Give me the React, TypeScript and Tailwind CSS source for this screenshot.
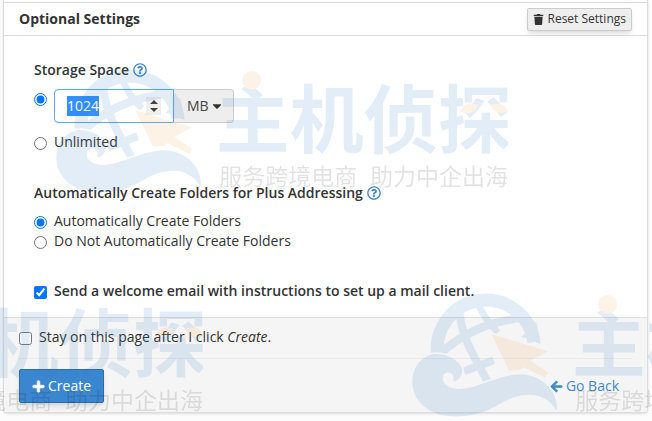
import { useEffect, useId, useRef, useState } from "react";
import { FaArrowLeft, FaCaretDown, FaPlus, FaRegQuestionCircle, FaTrash } from "react-icons/fa";

// ── Brand overlay ──────────────────────────────────────────────────────────────

const WAVE =
    "M92 224C110 219 160 222 184 260C190 275 184 294 168 302C162 306 156 302 161 296C161 282 150 274 138 279C124 285 125 302 137 314C190 355 275 285 360 283C425 284 477 335 470 392C430 325 355 338 300 371C255 400 205 411 158 409C90 408 37 365 37 306C37 268 55 236 92 224Z";
const ARROW = "M274 162L444 214L392 242L445 278L437 294L370 262L360 270L327 272Z";

function BrandMark() {
    const maskId = useId();

    return (
        <svg width="464" height="141" viewBox="0 0 1392 423" aria-hidden="true">
            <mask id={maskId} maskUnits="userSpaceOnUse" x="0" y="0" width="500" height="423">
                <rect width="500" height="423" fill="#fff" />
                <path d={WAVE} fill="#000" stroke="#000" strokeWidth="10" />
                <path d={ARROW} fill="#000" stroke="#000" strokeWidth="10" />
            </mask>
            <g opacity="0.13">
                <g mask={`url(#${maskId})`}>
                    <g fill="none" stroke="#2b78c4">
                        <path d="M113 226A144 144 0 0 1 402 186" strokeWidth="39" />
                        <path d="M124 218C180 168 250 126 385 110" strokeWidth="25" />
                        <path d="M177 84C182 160 210 210 262 303" strokeWidth="24" />
                        <path d="M232 62C244 100 264 128 294 158" strokeWidth="20" />
                        <path d="M192 274L281 241" strokeWidth="24" />
                    </g>
                    <path d="M364 172L384 174C396 184 410 189 422 192L410 130L366 110C378 130 386 142 380 152Z" fill="#2b78c4" />
                </g>
                <path d={WAVE} fill="#2b78c4" />
                <path d={ARROW} fill="#f5a14a" />
                <text
                    x="515"
                    y="272"
                    fontSize="222"
                    fontWeight="700"
                    fill="#2b78c4"
                    fontFamily="'Noto Sans CJK SC', sans-serif"
                >
                    主机侦探
                </text>
                <g fill="#f5a14a">
                    <circle cx="623" cy="73" r="28" />
                    <path d="M1248 166C1262 138 1286 140 1304 148C1288 178 1266 174 1248 166Z" />
                    <path d="M1338 148C1356 140 1380 138 1392 166C1374 176 1352 172 1338 148Z" />
                </g>
            </g>
            <g fontSize="69" fill="#000" opacity="0.11" fontFamily="'Noto Sans CJK SC', sans-serif">
                <text x="526" y="387">服务跨境电商</text>
                <text x="978" y="387">助力中企出海</text>
            </g>
        </svg>
    );
}

function BrandOverlay() {
    return (
        <div className="pointer-events-none absolute inset-0 overflow-hidden select-none">
            <div className="absolute top-[56px] left-[44px]"><BrandMark /></div>
            <div className="absolute top-[280px] left-[400px]"><BrandMark /></div>
            <div className="absolute top-[280px] left-[-261px]"><BrandMark /></div>
        </div>
    );
}

// ── Form pieces ────────────────────────────────────────────────────────────────

function HelpButton({ label }: { label: string }) {
    return (
        <button type="button" aria-label={label} className="text-[#3b84cc]">
            <FaRegQuestionCircle size={14} />
        </button>
    );
}

function QuotaInput() {
    const [quota, setQuota] = useState(1024);
    const ref = useRef<HTMLInputElement>(null);

    useEffect(() => {
        ref.current?.focus();
        ref.current?.select();
    }, []);

    return (
        <div className="flex">
            <div className="flex h-[34px] w-[120px] items-center rounded-l-sm border border-[#58a9f0] bg-white pr-3 pl-3">
                <input
                    ref={ref}
                    inputMode="numeric"
                    aria-label="Storage space"
                    value={quota}
                    onChange={(e) => setQuota(Number(e.target.value) || 0)}
                    className="h-5 w-full min-w-0 text-sm leading-5 text-[#555] outline-none selection:bg-[#3390ff] selection:text-white"
                />
                <div className="flex h-[18px] w-[15px] shrink-0 flex-col gap-px bg-[#efefef] py-[2px] text-[#444]">
                    <button
                        type="button"
                        aria-label="Increase"
                        onClick={() => setQuota(quota + 1)}
                        className="flex flex-1 items-center justify-center"
                    >
                        <svg width="8" height="4" viewBox="0 0 8 4" fill="currentColor"><path d="M4 0L8 4H0Z" /></svg>
                    </button>
                    <button
                        type="button"
                        aria-label="Decrease"
                        onClick={() => setQuota(Math.max(0, quota - 1))}
                        className="flex flex-1 items-center justify-center"
                    >
                        <svg width="8" height="4" viewBox="0 0 8 4" fill="currentColor"><path d="M4 4L0 0H8Z" /></svg>
                    </button>
                </div>
            </div>
            <div className="relative">
                <select
                    aria-label="Unit"
                    defaultValue="MB"
                    className="h-[34px] w-[60px] appearance-none rounded-r-sm border border-l-0 border-[#ccc] bg-[#eee] pl-[13px] text-sm text-[#444] outline-none"
                >
                    <option>MB</option>
                    <option>GB</option>
                    <option>TB</option>
                </select>
                <FaCaretDown size={14} className="pointer-events-none absolute top-[10px] right-[10px] text-[#333]" />
            </div>
        </div>
    );
}

// ── Page ───────────────────────────────────────────────────────────────────────

export default function App() {
    return (
        <div
            className="relative min-h-screen overflow-hidden bg-[#fcfcfc] pr-1 pl-[3px] text-sm leading-5 text-[#333]"
            style={{ fontFamily: "'Open Sans', sans-serif" }}
        >
            <form
                onSubmit={(e) => e.preventDefault()}
                className="rounded-b border border-t-0 border-[#ddd] bg-white shadow-sm"
            >
                <div className="h-[3px] border-b border-[#ddd]" />
                <div className="flex h-[33px] items-center justify-between border-b border-[#ddd] pr-[15px] pl-[15px]">
                    <h2 className="font-bold">Optional Settings</h2>
                    <button
                        type="button"
                        className="flex h-[23px] items-center gap-1 rounded-xs border border-[#ccc] bg-[#eee] px-[5px] text-xs shadow-md"
                    >
                        <FaTrash size={11} />
                        Reset Settings
                    </button>
                </div>

                <div className="px-[30px] pt-6 pb-4">
                    <div className="mb-[9px] flex items-center gap-1 font-semibold">
                        Storage Space
                        <HelpButton label="About storage space" />
                    </div>
                    <div className="mb-[9px] flex gap-[7px]">
                        <input
                            type="radio"
                            name="quota"
                            defaultChecked
                            aria-label="Limited storage"
                            className="mt-1 h-[13px] w-[13px]"
                        />
                        <QuotaInput />
                    </div>
                    <label className="flex items-center gap-[7px]">
                        <input type="radio" name="quota" className="mt-[3px] h-[13px] w-[13px]" />
                        Unlimited
                    </label>

                    <div className="mt-[31px] mb-2 flex items-center gap-1 font-semibold">
                        Automatically Create Folders for Plus Addressing
                        <HelpButton label="About plus addressing" />
                    </div>
                    <label className="flex items-center gap-[7px]">
                        <input type="radio" name="folders" defaultChecked className="mt-[3px] h-[13px] w-[13px]" />
                        Automatically Create Folders
                    </label>
                    <label className="flex items-center gap-[7px]">
                        <input type="radio" name="folders" className="mt-[3px] h-[13px] w-[13px]" />
                        Do Not Automatically Create Folders
                    </label>

                    <label className="mt-[30px] flex items-center gap-[7px] font-semibold">
                        <input type="checkbox" defaultChecked className="mt-[3px] h-[13px] w-[13px]" />
                        Send a welcome email with instructions to set up a mail client.
                    </label>
                </div>

                <div className="rounded-b border-t border-[#ddd] bg-[#f5f5f5] px-[15px] pt-[9px] pb-[9px]">
                    <label className="flex items-center gap-[7px]">
                        <input type="checkbox" className="mt-[3px] h-[13px] w-[13px]" />
                        <span>Stay on this page after I click <em>Create</em>.</span>
                    </label>
                    <hr className="mt-[11px] mb-[10px] border-[#eaeaea]" />
                    <div className="flex items-center justify-between pr-[13px]">
                        <button
                            type="submit"
                            className="flex h-[34px] items-center gap-[3px] rounded-xs border border-[#2a6dad] bg-[#3a87d0] px-3 text-white shadow-md"
                        >
                            <FaPlus size={13} stroke="currentColor" strokeWidth={36} />
                            Create
                        </button>
                        <a href="#back" className="flex items-center gap-[3px] text-[#428bca]">
                            <FaArrowLeft size={13} stroke="currentColor" strokeWidth={24} />
                            Go Back
                        </a>
                    </div>
                </div>
            </form>
            <BrandOverlay />
        </div>
    );
}
